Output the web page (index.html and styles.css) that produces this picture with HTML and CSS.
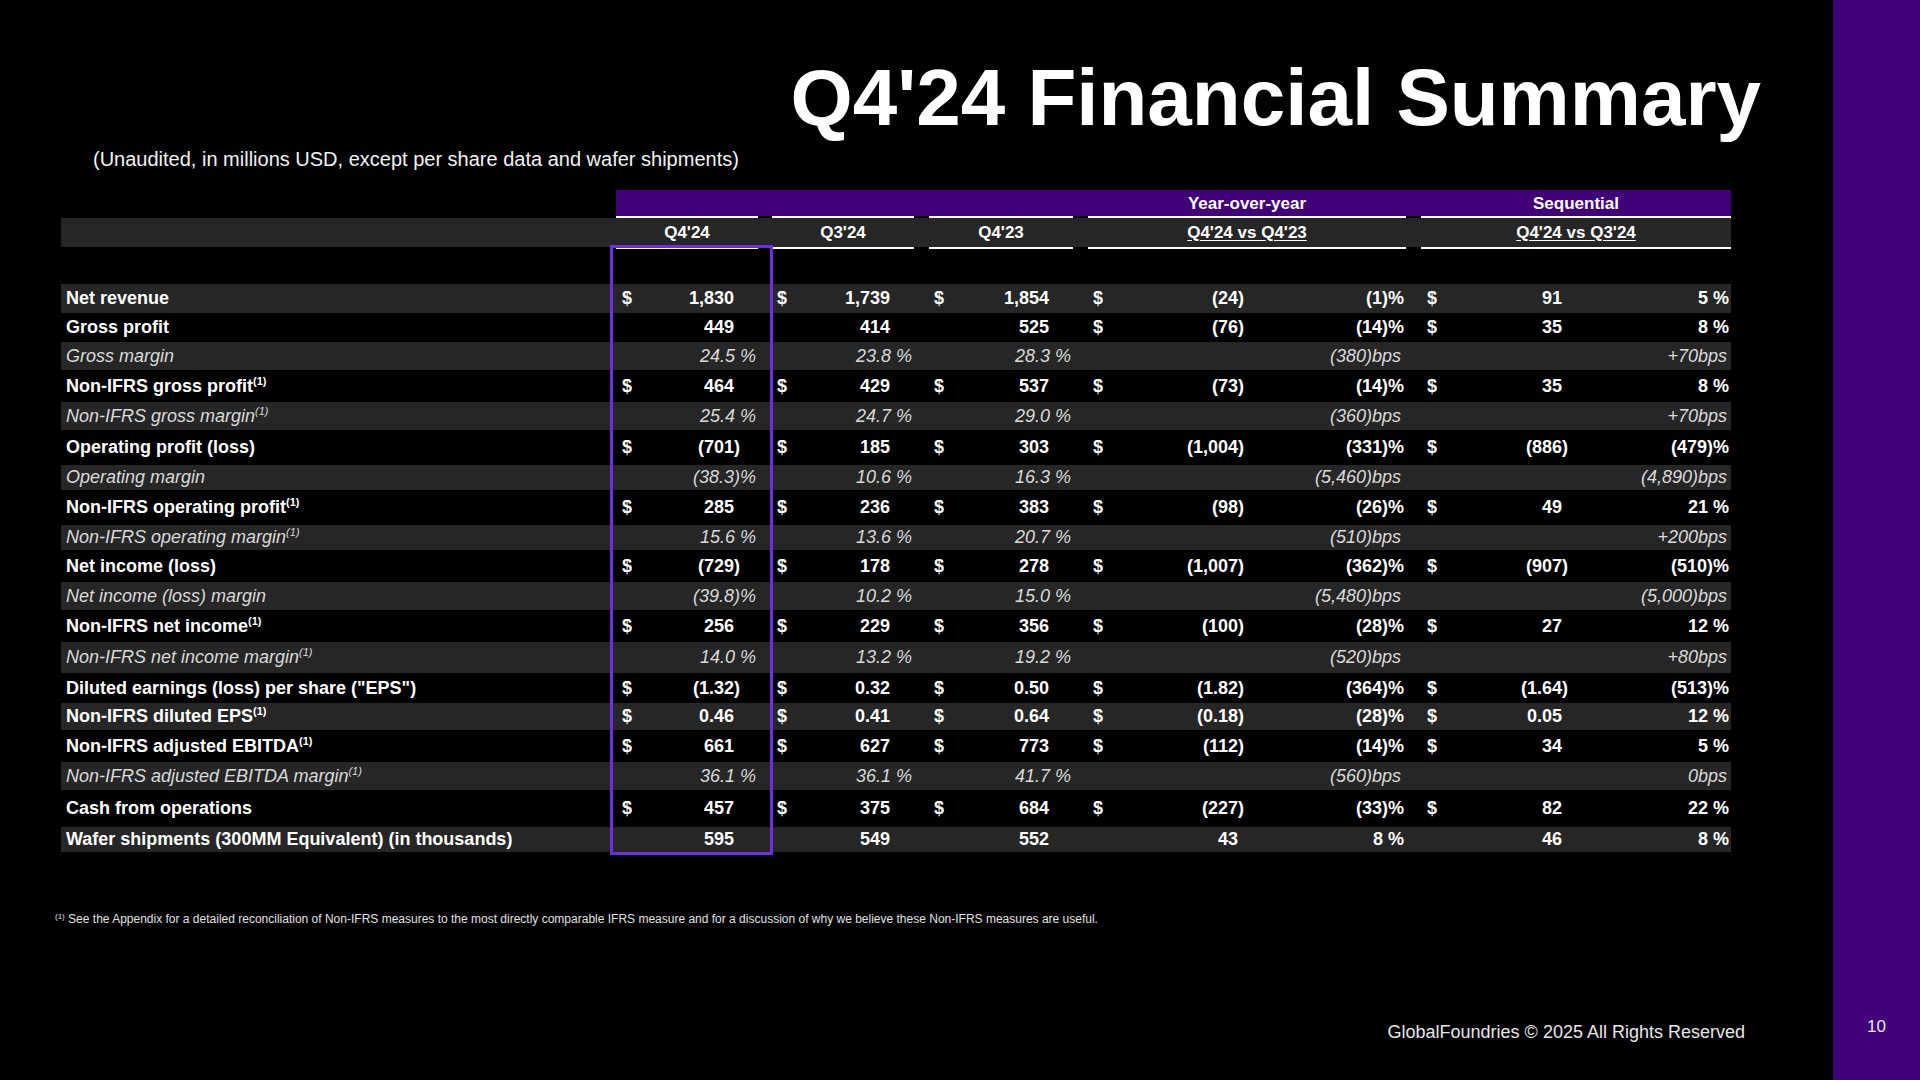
FILE: index.html
```html
<!DOCTYPE html>
<html lang="en">
<head>
<meta charset="utf-8">
<title>Q4'24 Financial Summary</title>
<link rel="stylesheet" href="styles.css">
</head>
<body>
<div class="slide">
  <main class="content">
    <h1 class="title">Q4'24 Financial Summary</h1>
    <p class="subtitle">(Unaudited, in millions USD, except per share data and wafer shipments)</p>

    <section class="table">
      <div class="cols band">
        <div class="bt yoy">Year-over-year</div>
        <div class="bt seq">Sequential</div>
      </div>
      <div class="cols hdr">
        <div class="hc c1">Q4'24</div>
        <div class="hc c2">Q3'24</div>
        <div class="hc c3">Q4'23</div>
        <div class="hc yoy"><u>Q4'24 vs Q4'23</u></div>
        <div class="hc seq"><u>Q4'24 vs Q3'24</u></div>
      </div>

      <div class="rows">
        <div class="cols row g h29">
          <div class="lb">Net revenue</div>
          <div class="v c1"><span class="d">$</span><span>1,830</span></div>
          <div class="v c2"><span class="d">$</span><span>1,739</span></div>
          <div class="v c3"><span class="d">$</span><span>1,854</span></div>
          <div class="v c4"><span class="d">$</span><span class="n">(24)</span></div>
          <div class="v c5">(1)%</div>
          <div class="v c6"><span class="d">$</span><span>91</span></div>
          <div class="v c7">5 %</div>
        </div>
        <div class="cols row h29">
          <div class="lb">Gross profit</div>
          <div class="v c1"><span>449</span></div>
          <div class="v c2"><span>414</span></div>
          <div class="v c3"><span>525</span></div>
          <div class="v c4"><span class="d">$</span><span class="n">(76)</span></div>
          <div class="v c5">(14)%</div>
          <div class="v c6"><span class="d">$</span><span>35</span></div>
          <div class="v c7">8 %</div>
        </div>
        <div class="cols row g i h28">
          <div class="lb">Gross margin</div>
          <div class="v c1">24.5 %</div>
          <div class="v c2">23.8 %</div>
          <div class="v c3">28.3 %</div>
          <div class="v c4"></div>
          <div class="v c5">(380)bps</div>
          <div class="v c6"></div>
          <div class="v c7">+70bps</div>
        </div>
        <div class="cols row h32">
          <div class="lb">Non-IFRS gross profit<sup>(1)</sup></div>
          <div class="v c1"><span class="d">$</span><span>464</span></div>
          <div class="v c2"><span class="d">$</span><span>429</span></div>
          <div class="v c3"><span class="d">$</span><span>537</span></div>
          <div class="v c4"><span class="d">$</span><span class="n">(73)</span></div>
          <div class="v c5">(14)%</div>
          <div class="v c6"><span class="d">$</span><span>35</span></div>
          <div class="v c7">8 %</div>
        </div>
        <div class="cols row g i h28">
          <div class="lb">Non-IFRS gross margin<sup>(1)</sup></div>
          <div class="v c1">25.4 %</div>
          <div class="v c2">24.7 %</div>
          <div class="v c3">29.0 %</div>
          <div class="v c4"></div>
          <div class="v c5">(360)bps</div>
          <div class="v c6"></div>
          <div class="v c7">+70bps</div>
        </div>
        <div class="cols row h35">
          <div class="lb">Operating profit (loss)</div>
          <div class="v c1"><span class="d">$</span><span class="n">(701)</span></div>
          <div class="v c2"><span class="d">$</span><span>185</span></div>
          <div class="v c3"><span class="d">$</span><span>303</span></div>
          <div class="v c4"><span class="d">$</span><span class="n">(1,004)</span></div>
          <div class="v c5">(331)%</div>
          <div class="v c6"><span class="d">$</span><span class="n">(886)</span></div>
          <div class="v c7">(479)%</div>
        </div>
        <div class="cols row g i h25">
          <div class="lb">Operating margin</div>
          <div class="v c1">(38.3)%</div>
          <div class="v c2">10.6 %</div>
          <div class="v c3">16.3 %</div>
          <div class="v c4"></div>
          <div class="v c5">(5,460)bps</div>
          <div class="v c6"></div>
          <div class="v c7">(4,890)bps</div>
        </div>
        <div class="cols row h35">
          <div class="lb">Non-IFRS operating profit<sup>(1)</sup></div>
          <div class="v c1"><span class="d">$</span><span>285</span></div>
          <div class="v c2"><span class="d">$</span><span>236</span></div>
          <div class="v c3"><span class="d">$</span><span>383</span></div>
          <div class="v c4"><span class="d">$</span><span class="n">(98)</span></div>
          <div class="v c5">(26)%</div>
          <div class="v c6"><span class="d">$</span><span>49</span></div>
          <div class="v c7">21 %</div>
        </div>
        <div class="cols row g i h25">
          <div class="lb">Non-IFRS operating margin<sup>(1)</sup></div>
          <div class="v c1">15.6 %</div>
          <div class="v c2">13.6 %</div>
          <div class="v c3">20.7 %</div>
          <div class="v c4"></div>
          <div class="v c5">(510)bps</div>
          <div class="v c6"></div>
          <div class="v c7">+200bps</div>
        </div>
        <div class="cols row h32">
          <div class="lb">Net income (loss)</div>
          <div class="v c1"><span class="d">$</span><span class="n">(729)</span></div>
          <div class="v c2"><span class="d">$</span><span>178</span></div>
          <div class="v c3"><span class="d">$</span><span>278</span></div>
          <div class="v c4"><span class="d">$</span><span class="n">(1,007)</span></div>
          <div class="v c5">(362)%</div>
          <div class="v c6"><span class="d">$</span><span class="n">(907)</span></div>
          <div class="v c7">(510)%</div>
        </div>
        <div class="cols row g i h28">
          <div class="lb">Net income (loss) margin</div>
          <div class="v c1">(39.8)%</div>
          <div class="v c2">10.2 %</div>
          <div class="v c3">15.0 %</div>
          <div class="v c4"></div>
          <div class="v c5">(5,480)bps</div>
          <div class="v c6"></div>
          <div class="v c7">(5,000)bps</div>
        </div>
        <div class="cols row h32">
          <div class="lb">Non-IFRS net income<sup>(1)</sup></div>
          <div class="v c1"><span class="d">$</span><span>256</span></div>
          <div class="v c2"><span class="d">$</span><span>229</span></div>
          <div class="v c3"><span class="d">$</span><span>356</span></div>
          <div class="v c4"><span class="d">$</span><span class="n">(100)</span></div>
          <div class="v c5">(28)%</div>
          <div class="v c6"><span class="d">$</span><span>27</span></div>
          <div class="v c7">12 %</div>
        </div>
        <div class="cols row g i h31">
          <div class="lb">Non-IFRS net income margin<sup>(1)</sup></div>
          <div class="v c1">14.0 %</div>
          <div class="v c2">13.2 %</div>
          <div class="v c3">19.2 %</div>
          <div class="v c4"></div>
          <div class="v c5">(520)bps</div>
          <div class="v c6"></div>
          <div class="v c7">+80bps</div>
        </div>
        <div class="cols row h30">
          <div class="lb">Diluted earnings (loss) per share ("EPS")</div>
          <div class="v c1"><span class="d">$</span><span class="n">(1.32)</span></div>
          <div class="v c2"><span class="d">$</span><span>0.32</span></div>
          <div class="v c3"><span class="d">$</span><span>0.50</span></div>
          <div class="v c4"><span class="d">$</span><span class="n">(1.82)</span></div>
          <div class="v c5">(364)%</div>
          <div class="v c6"><span class="d">$</span><span class="n">(1.64)</span></div>
          <div class="v c7">(513)%</div>
        </div>
        <div class="cols row g h27">
          <div class="lb">Non-IFRS diluted EPS<sup>(1)</sup></div>
          <div class="v c1"><span class="d">$</span><span>0.46</span></div>
          <div class="v c2"><span class="d">$</span><span>0.41</span></div>
          <div class="v c3"><span class="d">$</span><span>0.64</span></div>
          <div class="v c4"><span class="d">$</span><span class="n">(0.18)</span></div>
          <div class="v c5">(28)%</div>
          <div class="v c6"><span class="d">$</span><span>0.05</span></div>
          <div class="v c7">12 %</div>
        </div>
        <div class="cols row h32">
          <div class="lb">Non-IFRS adjusted EBITDA<sup>(1)</sup></div>
          <div class="v c1"><span class="d">$</span><span>661</span></div>
          <div class="v c2"><span class="d">$</span><span>627</span></div>
          <div class="v c3"><span class="d">$</span><span>773</span></div>
          <div class="v c4"><span class="d">$</span><span class="n">(112)</span></div>
          <div class="v c5">(14)%</div>
          <div class="v c6"><span class="d">$</span><span>34</span></div>
          <div class="v c7">5 %</div>
        </div>
        <div class="cols row g i h28">
          <div class="lb">Non-IFRS adjusted EBITDA margin<sup>(1)</sup></div>
          <div class="v c1">36.1 %</div>
          <div class="v c2">36.1 %</div>
          <div class="v c3">41.7 %</div>
          <div class="v c4"></div>
          <div class="v c5">(560)bps</div>
          <div class="v c6"></div>
          <div class="v c7">0bps</div>
        </div>
        <div class="cols row h37">
          <div class="lb">Cash from operations</div>
          <div class="v c1"><span class="d">$</span><span>457</span></div>
          <div class="v c2"><span class="d">$</span><span>375</span></div>
          <div class="v c3"><span class="d">$</span><span>684</span></div>
          <div class="v c4"><span class="d">$</span><span class="n">(227)</span></div>
          <div class="v c5">(33)%</div>
          <div class="v c6"><span class="d">$</span><span>82</span></div>
          <div class="v c7">22 %</div>
        </div>
        <div class="cols row g h25">
          <div class="lb">Wafer shipments (300MM Equivalent) (in thousands)</div>
          <div class="v c1"><span>595</span></div>
          <div class="v c2"><span>549</span></div>
          <div class="v c3"><span>552</span></div>
          <div class="v c4"><span>43</span></div>
          <div class="v c5">8 %</div>
          <div class="v c6"><span>46</span></div>
          <div class="v c7">8 %</div>
        </div>
      </div>

      <div class="highlight"></div>
    </section>

    <p class="footnote"><sup>(1)</sup> See the Appendix for a detailed reconciliation of Non-IFRS measures to the most directly comparable IFRS measure and for a discussion of why we believe these Non-IFRS measures are useful.</p>

    <footer class="footer">GlobalFoundries © 2025 All Rights Reserved</footer>
  </main>
  <aside class="sidebar"><span class="pagenum">10</span></aside>
</div>
</body>
</html>
```

FILE: styles.css
```css
* { box-sizing: border-box; margin: 0; padding: 0; }

html, body {
  width: 1920px;
  height: 1080px;
  background: #000;
  overflow: hidden;
}

body {
  font-family: "Liberation Sans", Arial, sans-serif;
  color: #fff;
}

.slide {
  display: flex;
  width: 1920px;
  height: 1080px;
}

.content {
  flex: 1;
  display: flex;
  flex-direction: column;
  padding-top: 58px;
}

.sidebar {
  width: 87px;
  background: #41007a;
  display: flex;
  flex-direction: column;
  justify-content: flex-end;
  align-items: center;
  padding-bottom: 43px;
}

.pagenum {
  font-size: 17px;
  line-height: 20px;
  color: #e6e6e6;
}

.title {
  font-size: 80px;
  line-height: 80px;
  font-weight: 700;
  text-align: right;
  padding-right: 72px;
}

.subtitle {
  font-size: 20px;
  line-height: 24px;
  margin: 9px 0 0 93px;
  color: #f2f2f2;
}

/* ---------- table ---------- */
.table {
  position: relative;
  margin: 19px 0 0 61px;
  width: 1670px;
}

.cols {
  display: grid;
  grid-template-columns: 555px 142px 156px 159px 177px 156px 169px 156px;
}

.band {
  height: 26px;
  padding-top: 2px;
  background: linear-gradient(#420078, #420078) 555px 0 / 1115px 100% no-repeat;
  align-items: center;
  font-size: 17px;
  font-weight: 700;
}

.bt { text-align: center; }

.yoy { grid-column: 5 / 7; margin-left: 15px; }
.seq { grid-column: 7 / 9; margin-left: 15px; }

.hdr {
  height: 33px;
  background: linear-gradient(#262626, #262626) 0 2px / 100% 29px no-repeat;
}

.hc {
  border-top: 2px solid #fff;
  border-bottom: 2px solid #fff;
  display: flex;
  align-items: center;
  justify-content: center;
  font-size: 17px;
  font-weight: 700;
}

.hc.c1 { grid-column: 2; }
.hc.c2 { grid-column: 3; margin-left: 14px; }
.hc.c3 { grid-column: 4; margin-left: 15px; }

.hc u { text-underline-offset: 2px; }

.rows { margin-top: 35px; }

.row {
  align-items: center;
  font-size: 18px;
  font-weight: 700;
  white-space: nowrap;
}

.row.g { background: #262626; }

.row.i {
  font-weight: 400;
  font-style: italic;
  color: #dadada;
}

.h25 { height: 25px; }
.h27 { height: 27px; }
.h28 { height: 28px; }
.h29 { height: 29px; }
.h30 { height: 30px; }
.h31 { height: 31px; }
.h32 { height: 32px; }
.h35 { height: 35px; }
.h37 { height: 37px; }

.lb { padding-left: 5px; }

.v {
  display: flex;
  justify-content: flex-end;
  align-items: baseline;
}

.d { margin-right: auto; }
.n { margin-right: -6px; }

.v.c1 { padding-left: 6px; padding-right: 24px; }
.v.c2 { padding-left: 19px; padding-right: 24px; }
.v.c3 { padding-left: 20px; padding-right: 24px; }
.v.c4 { padding-left: 20px; padding-right: 12px; }
.v.c5 { padding-right: 2px; }
.v.c6 { padding-left: 21px; padding-right: 13px; }
.v.c7 { padding-right: 2px; }

.i .v.c1, .i .v.c2, .i .v.c3 { padding-right: 2px; }
.i .v.c5 { padding-right: 5px; }
.i .v.c7 { padding-right: 4px; }

.row sup {
  font-size: 11px;
  line-height: 0;
  vertical-align: 7px;
}

.highlight {
  position: absolute;
  left: 549px;
  top: 55px;
  width: 163px;
  height: 610px;
  border: 3px solid #6b30e6;
  pointer-events: none;
}

/* ---------- footer ---------- */
.footnote {
  margin: 60px 0 0 55px;
  font-size: 12px;
  line-height: 14px;
  color: #e0e0e0;
}

.footnote sup {
  font-size: 8px;
  line-height: 0;
  vertical-align: 4px;
}

.footer {
  margin-top: auto;
  text-align: right;
  padding-right: 88px;
  padding-bottom: 37px;
  font-size: 18px;
  line-height: 22px;
  color: #e6e6e6;
}
```
